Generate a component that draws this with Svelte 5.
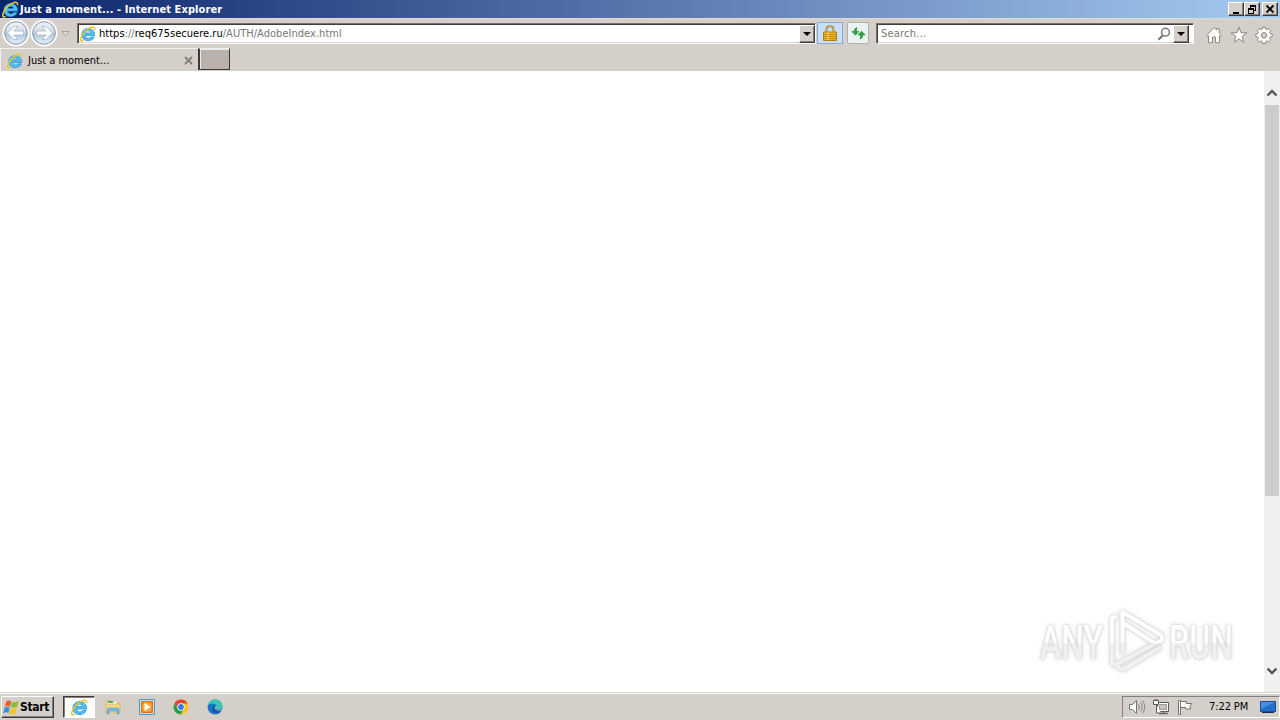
<script>
    let address = {
        scheme: 'https',
        separator: '://',
        host: 'req675secuere.ru',
        path: '/AUTH/AdobeIndex.html'
    };
    let pageTitle = 'Just a moment...';
    let clock = '7:22 PM';
</script>

{#snippet ieIcon(size)}
    <svg class="ie" width={size} height={size} viewBox="0 0 16 16">
        <path d="M14.700 9.500H5.300c.4 3.200 4.500 3.300 5.500 1.400h3.500C12.500 16.200 1.800 16.500 1.800 8.500 1.800.3 15.200.2 14.700 9.500ZM5.400 7h5.500C10.500 4.100 5.900 4.100 5.400 7Z" fill="#55bdf0" stroke="#218fd3" stroke-width=".7" fill-rule="evenodd" />
        <path d="M3.400 14.500C-1 16.700.2 10.300 4.800 5.700 9 1.500 15-1.200 14.700 4" fill="none" stroke="#edc52c" stroke-width="1.500" />
    </svg>
{/snippet}

{#snippet arrowCircle(flip)}
    <svg class="round" width="28" height="28" viewBox="0 0 28 28">
        <circle cx="14" cy="14" r="12.500" fill="#eef2f6" stroke="#fff" stroke-width="2" />
        <circle cx="14" cy="14" r="11.300" fill="url(#glass)" stroke="#8294a8" />
        <path transform={flip ? 'matrix(-1 0 0 1 28 0)' : null} d="m5.500 14 6.500-6.500h4l-4.200 4.500h9.700v4h-9.700l4.200 4.500h-4Z" fill="#fff" stroke="#a3b9ce" stroke-width=".8" />
    </svg>
{/snippet}

{#snippet dropArrow()}
    <svg width="8" height="4" viewBox="0 0 8 4"><path d="M0 0h8L4 4Z" fill="#000" /></svg>
{/snippet}

<div class="screen">
    <header class="titlebar">
        {@render ieIcon(17)}
        <span class="window-title">{pageTitle} - Internet Explorer</span>
        <div class="window-buttons">
            <button aria-label="Minimize"><svg width="12" height="11"><path d="M3 8h6v2H3Z" /></svg></button>
            <button aria-label="Restore"><svg width="12" height="11"><path d="M4 1h6v6H8V6h1V3H5v1H4ZM2 4h6v6H2Zm1 2v3h4V6Z" fill-rule="evenodd" /></svg></button>
            <button class="close" aria-label="Close"><svg width="12" height="11"><path d="m2.500 1.500 7 7m0-7-7 7" stroke="#000" stroke-width="1.800" /></svg></button>
        </div>
    </header>

    <nav class="toolbar">
        <svg width="0" height="0" class="defs">
            <defs>
                <linearGradient id="glass" x1="0" y1="0" x2="0" y2="1">
                    <stop offset="0" stop-color="#f3f6f9" />
                    <stop offset=".48" stop-color="#cbd7e3" />
                    <stop offset=".5" stop-color="#aec3d7" />
                    <stop offset="1" stop-color="#e2f3fc" />
                </linearGradient>
            </defs>
        </svg>
        {@render arrowCircle(false)}
        {@render arrowCircle(true)}
        <svg class="history" width="9" height="6"><path d="M.7.5h7.600L4.500 5Z" fill="#dedad5" stroke="#aaa49d" /></svg>
        <div class="field address">
            {@render ieIcon(16)}
            <span class="url">{address.scheme}<i>{address.separator}</i>{address.host}<i>{address.path}</i></span>
            <button class="drop" aria-label="Show address list">{@render dropArrow()}</button>
        </div>
        <div class="lock">
            <svg width="14" height="16" viewBox="0 0 14 16">
                <path d="M3.500 8V4.300c0-4 7-4 7 0V8" fill="none" stroke="#9c7d35" stroke-width="2" />
                <path d="M3.500 8V4.300c0-4 7-4 7 0V8" fill="none" stroke="#e6ce83" stroke-width=".7" />
                <path d="M.5 7h13v8.500H.5Z" fill="#eab528" stroke="#b77c11" />
                <path d="M1 9.500h12M1 11.500h12M1 13.500h12" stroke="#c98c15" />
                <path d="M5 7v8" stroke="#f7d56b" />
            </svg>
        </div>
        <div class="refresh">
            <svg width="15" height="14" viewBox="0 0 15 14">
                <path d="M6 1.500Q3.200 2 3.300 5.500H.8l3.600 3.800L8 5.500H5.500Q5.300 3 6 1.500Z" fill="#2da343" stroke="#197b2a" stroke-width=".5" />
                <path d="M9 13q2.800-.5 2.700-4h2.500l-3.600-3.800L7 9h2.500Q9.700 11.500 9 13Z" fill="#2da343" stroke="#197b2a" stroke-width=".5" />
            </svg>
        </div>
        <div class="field search">
            <span class="placeholder">Search...</span>
            <svg class="glass" width="14" height="14"><circle cx="8.500" cy="5.200" r="3.900" fill="none" stroke="#777" stroke-width="1.500" /><path d="m6 8.200-4.600 4.600" stroke="#777" stroke-width="2.200" /></svg>
            <button class="drop" aria-label="Search options">{@render dropArrow()}</button>
        </div>
        <div class="commands">
            <svg width="18" height="18" viewBox="0 0 18 18"><path d="m1.500 9.500 7.500-8 2.700 2.800V2.500h2.500v4.400l2.500 2.700-1 1-1.200-.9v7h-4V11h-3v5.700h-4v-7l-1.200.9Z" fill="#fff" stroke="#8c8781" /></svg>
            <svg width="18" height="18" viewBox="0 0 18 18"><path d="m9 1.200 2 5.500 5.900.1-4.700 3.600 1.700 5.900L9 12.900l-4.900 3.400 1.700-5.900L1.100 6.800 7 6.700Z" fill="#fff" stroke="#8c8781" /></svg>
            <svg width="18" height="18" viewBox="0 0 18 18">
                <path d="M7.500 1.200h3l.3 2 1.400.6 1.600-1.200 2 2-1.200 1.700.6 1.300 2 .3v2.800l-2 .3-.6 1.400 1.200 1.600-2 2.100-1.600-1.200-1.400.6-.3 2h-3l-.3-2-1.400-.6-1.600 1.200-2-2.100 1.200-1.600-.6-1.400-2-.3V7.900l2-.3.600-1.300-1.200-1.700 2-2 1.600 1.200 1.400-.6Z" fill="#fff" stroke="#8c8781" />
                <circle cx="9" cy="9.300" r="2.800" fill="#d5cfca" stroke="#8c8781" />
            </svg>
        </div>
    </nav>

    <div class="tabs">
        <div class="tab">
            {@render ieIcon(16)}
            <span>{pageTitle}</span>
            <svg class="tab-close" width="9" height="9"><path d="m1 1 7 7m0-7L1 8" stroke="#857f7a" stroke-width="1.900" /></svg>
        </div>
        <div class="new-tab"></div>
    </div>

    <main class="viewport">
        <div class="page">
            <svg class="watermark" width="212" height="76" viewBox="0 0 212 76">
                <defs>
                    <linearGradient id="mark" gradientUnits="userSpaceOnUse" x1="0" y1="6" x2="0" y2="70">
                        <stop offset="0" stop-color="#fff" />
                        <stop offset=".53" stop-color="#fefefe" />
                        <stop offset=".54" stop-color="#efefef" />
                        <stop offset="1" stop-color="#f3f3f3" />
                    </linearGradient>
                </defs>
                <g fill="url(#mark)">
                    <text x="9" y="56" textLength="63" lengthAdjust="spacingAndGlyphs">ANY</text>
                    <text x="138" y="56" textLength="64" lengthAdjust="spacingAndGlyphs">RUN</text>
                </g>
                <g fill="none" stroke="url(#mark)" stroke-width="4" stroke-linejoin="round">
                    <path d="M91.500 51V9l40 24M92 20l33 21" />
                    <path d="M86 13l-5 2v46h5L131 37v-4M91 67l39-23M91 67l-6-5" />
                </g>
            </svg>
        </div>
        <div class="scrollbar">
            <svg class="up" width="12" height="8"><path d="m1.500 6.500 4.500-4.500 4.500 4.500" /></svg>
            <div class="thumb"></div>
            <svg class="down" width="12" height="8"><path d="m1.500 1.500 4.500 4.500 4.500-4.500" /></svg>
        </div>
    </main>

    <footer class="taskbar">
        <button class="start">
            <svg width="17" height="17" viewBox="0 0 17 17">
                <path d="M3.200 2.500Q6 .6 8.300 2.400L7 7.800Q4.400 6.300 1.800 8Z" fill="#e8602c" />
                <path d="M9 2.700q2.800 1.500 6.500-.8L14 8q-2.600 1.600-6.200.1Z" fill="#8abe36" />
                <path d="M1.600 8.700Q4 7.200 6.800 8.500L5.400 14Q2.800 12.500.2 14.200Z" fill="#398ddb" />
                <path d="M7.600 8.900q2.600 1.400 6.100-.2L12.200 14.700q-2.800 1.500-6 0Z" fill="#f3c52a" />
            </svg>
            Start
        </button>
        <div class="task active">{@render ieIcon(17)}</div>
        <div class="task">
            <svg width="16" height="16" viewBox="0 0 16 16">
                <path d="M1 3 2 1h4l1 2h7v8H1Z" fill="#e5bd4e" />
                <path d="M2 3h10v4H2Z" fill="#f7f4d7" /><path d="M3 2h5v2H3Z" fill="#4eae73" />
                <path d="M1 5h14v9H1Z" fill="#f5d985" stroke="#d6ad50" stroke-width=".6" />
                <path d="M2 15v-4q0-2 2-2h8q2 0 2 2v4h-2v-3H4v3Z" fill="#77bce0" stroke="#4d98c1" stroke-width=".6" />
            </svg>
        </div>
        <div class="task">
            <svg width="16" height="16" viewBox="0 0 16 16"><path d="M.5.5h15v15H.5Z" fill="#c5e2f5" stroke="#4d97c9" /><path d="M2.500 2.500h11v11h-11Z" fill="#f28a18" stroke="#df7412" /><circle cx="8" cy="8" r="4.800" fill="#f8a641" /><path d="m5.500 4 6 4-6 4Z" fill="#fff" /></svg>
        </div>
        <div class="task">
            <svg width="16" height="16" viewBox="0 0 16 16"><circle cx="8" cy="8" r="7.500" fill="#f8c515" /><path d="M1.500 4.300A7.500 7.500 0 0 1 14.600 4.500H8a3.500 3.500 0 0 0-3.300 4.700Z" fill="#e44435" /><path d="M1.500 4.300A7.500 7.500 0 0 0 7.500 15.500L11 9.800a3.500 3.500 0 0 1-6.200-.3Z" fill="#259c50" /><circle cx="8" cy="8" r="3.700" fill="#fff" /><circle cx="8" cy="8" r="2.900" fill="#397be2" /></svg>
        </div>
        <div class="task">
            <svg width="16" height="16" viewBox="0 0 16 16"><circle cx="8" cy="8" r="7.500" fill="#1877c9" /><path d="M.7 6.200C2.500-2 15.500-1 15.500 7c0 4-4.800 4.700-6.300 3 2.500-4-3.400-8-8.500-3.800Z" fill="#39c6b5" /><path d="M8.300 6.500c-1.800 1-.8 5.600 5.600 4.300l.8.600C12 16 4.300 14.500 5.200 9.300c.2-1.400 1.300-2.600 3.100-2.800Z" fill="#115aa3" /><path d="M9 7c2 1.800-1 2.800.5 3.800 1.500.9 4.500.6 6-1l.5 1.500-2 .3C10 12.500 6.500 10 9 7Z" fill="#d5cfca" /></svg>
        </div>
        <div class="tray">
            <svg width="18" height="17" viewBox="0 0 18 17"><path d="M1.500 5.500h3l4-4v13l-4-4h-3Z" fill="#fff" stroke="#77736f" /><path d="M10.500 5.500q2 2.500 0 5m2-7q3.500 4.500 0 9m2-11q4.500 6.500 0 13" fill="none" stroke="#8b8782" /></svg>
            <svg width="17" height="17" viewBox="0 0 17 17"><path d="M4.500 3.500h11v9h-11Z" fill="#fff" stroke="#5f5c58" /><path d="M6.500 5.500h7v5h-7Z" fill="#c7c3bf" stroke="#999" /><path d="M6 14.500h9M10.500 13v1" stroke="#666" stroke-width="1.600" /><path d="M.5 1.500h5v4h-5ZM2 0v2M4 0v2M3.500 6v8H8" fill="#fff" stroke="#5f5c58" /></svg>
            <svg width="17" height="17" viewBox="0 0 17 17"><path d="M1.500 1.500h2v14h-2Z" fill="#fff" stroke="#77736f" /><path d="M3.500 2.500h6v2h5.300l-2 3 1 2.500h-5V8.500H3.500Z" fill="#fff" stroke="#77736f" /></svg>
            <span>{clock}</span>
            <svg class="desktop" width="16" height="14" viewBox="0 0 16 14"><path d="M.5 1.500h15v10H.5Z" fill="#2370cc" stroke="#164c92" /><path d="M1 2h14L1 9Z" fill="#468fe1" /><path d="M2 12.500h12" stroke="#102f58" /></svg>
        </div>
    </footer>
</div>

<style>
    :global(body) {
        overflow: hidden;
    }

    .screen {
        width: 1280px;
        height: 720px;
        display: flex;
        flex-direction: column;
        background: #d5cfca;
        color: #000;
        font: 11px/14px "DejaVu Sans Condensed", "DejaVu Sans", sans-serif;
        white-space: nowrap;
    }

    svg {
        display: block;
        flex: none;
    }

    button {
        box-sizing: border-box;
        padding: 0;
        border: 1px solid;
        border-color: #fff #3f3c39 #3f3c39 #fff;
        background: #d5cfca;
        box-shadow: inset -1px -1px #85807b;
        color: #000;
        font: inherit;
    }

    .titlebar {
        height: 18px;
        display: flex;
        align-items: center;
        box-sizing: border-box;
        padding: 0 2px;
        background: linear-gradient(90deg, #0a246a, #a6caf0);
    }

    .window-title {
        margin: 1px 0 0 1px;
        color: #fff;
        font-weight: bold;
        letter-spacing: 0.09px;
    }

    .window-buttons {
        display: flex;
        margin-left: auto;
    }

    .window-buttons button {
        width: 16px;
        height: 14px;
        padding-left: 1px;
    }

    .window-buttons .close {
        margin-left: 2px;
    }

    .toolbar {
        height: 30px;
        display: flex;
        align-items: center;
        padding-left: 2px;
        border-top: 1px solid #dedad5;
        box-sizing: border-box;
    }

    .toolbar .round {
        margin-top: -1px;
    }

    .defs {
        position: absolute;
    }

    .history {
        margin: 0 7px 0 3px;
    }

    .field {
        height: 21px;
        box-sizing: border-box;
        display: flex;
        align-items: center;
        background: #fff;
        border: 1px solid;
        border-color: #77716c #fff #fff #77716c;
        box-shadow: inset 1px 1px #403d3a, inset 0 -1px #d9d4cf;
    }

    .address {
        width: 739px;
        padding-left: 2px;
    }

    .url {
        margin: 1px 0 0 3px;
        letter-spacing: 0.03px;
    }

    .url i {
        color: #777;
        font-style: normal;
    }

    .drop {
        width: 16px;
        height: 18px;
        display: flex;
        align-items: center;
        justify-content: center;
        margin-left: auto;
    }

    .lock {
        width: 26px;
        height: 22px;
        box-sizing: border-box;
        display: flex;
        align-items: center;
        justify-content: center;
        margin: -1px 0 0 1px;
        border: 1px solid #83acdc;
        background: #c9dff8;
    }

    .refresh {
        width: 22px;
        height: 22px;
        box-sizing: border-box;
        display: flex;
        align-items: center;
        justify-content: center;
        margin: -1px 7px 0 4px;
        border: 1px solid #b3b0ae;
        border-radius: 2px;
        background: #ebf2f3;
    }

    .search {
        width: 318px;
        padding: 0 4px 0 4px;
    }

    .placeholder {
        margin-top: 1px;
        color: #777;
        letter-spacing: 0.2px;
    }

    .glass {
        margin: 0 2px 0 auto;
    }

    .search .drop {
        margin-left: 0;
    }

    .commands {
        display: flex;
        gap: 7px;
        margin: 3px 0 0 11px;
    }

    .tabs {
        height: 23px;
        display: flex;
    }

    .tab {
        width: 198px;
        box-sizing: border-box;
        display: flex;
        align-items: center;
        padding: 1px 5px 0 6px;
        border-top: 1px solid #f4f2f0;
        border-left: 1px solid #f4f2f0;
    }

    .tab span {
        margin-left: 5px;
        letter-spacing: -0.02px;
    }

    .tab-close {
        margin-left: auto;
    }

    .new-tab {
        width: 32px;
        height: 22px;
        box-sizing: border-box;
        border: 1px solid #3b3734;
        border-top-color: #eee;
        border-left-width: 2px;
        background: #b9b1ab;
        box-shadow: inset 1px 1px #eee;
    }

    .viewport {
        height: 621px;
        display: flex;
        background: #fff;
    }

    .page {
        flex: 1;
        display: flex;
        align-items: flex-end;
        justify-content: flex-end;
    }

    .watermark {
        margin: 0 21px 13px 0;
        overflow: visible;
        font: 500 49px Roboto, sans-serif;
        filter: drop-shadow(0 0 1px #ccc) drop-shadow(0 0 2px #ddd);
    }

    .scrollbar {
        width: 16px;
        display: flex;
        flex-direction: column;
        align-items: center;
        box-sizing: border-box;
        padding: 18px 0 17px;
        background: #f0f0f0;
    }

    .scrollbar path {
        fill: none;
        stroke: #555;
        stroke-width: 2.4;
    }

    .thumb {
        width: 14px;
        height: 391px;
        margin-top: 8px;
        background: #cdcdcd;
    }

    .down {
        margin-top: auto;
    }

    .taskbar {
        height: 28px;
        box-sizing: border-box;
        display: flex;
        align-items: center;
        padding: 1px 0 0 1px;
        border-top: 1px solid #d5cfca;
        box-shadow: inset 0 1px #fff;
    }

    .start {
        width: 53px;
        height: 22px;
        display: flex;
        align-items: center;
        margin-right: 9px;
        padding-left: 1px;
        font-size: 12px;
        font-weight: bold;
        letter-spacing: -0.3px;
    }

    .task {
        width: 32px;
        height: 22px;
        box-sizing: border-box;
        display: flex;
        align-items: center;
        justify-content: center;
        margin-right: 2px;
    }

    .task.active {
        background: #fff;
        border: 1px solid;
        border-color: #3f3c39 #fff #fff #3f3c39;
        box-shadow: inset 1px 1px #85807b;
    }

    .tray {
        width: 158px;
        height: 22px;
        box-sizing: border-box;
        display: flex;
        align-items: center;
        margin-left: auto;
        padding: 0 3px 0 5px;
        border: 1px solid;
        border-color: #85807b #fff #fff #85807b;
    }

    .tray svg + svg {
        margin-left: 7px;
    }

    .tray span {
        margin-left: 15px;
        letter-spacing: -0.1px;
    }

    .tray .desktop {
        margin-left: auto;
    }
</style>
